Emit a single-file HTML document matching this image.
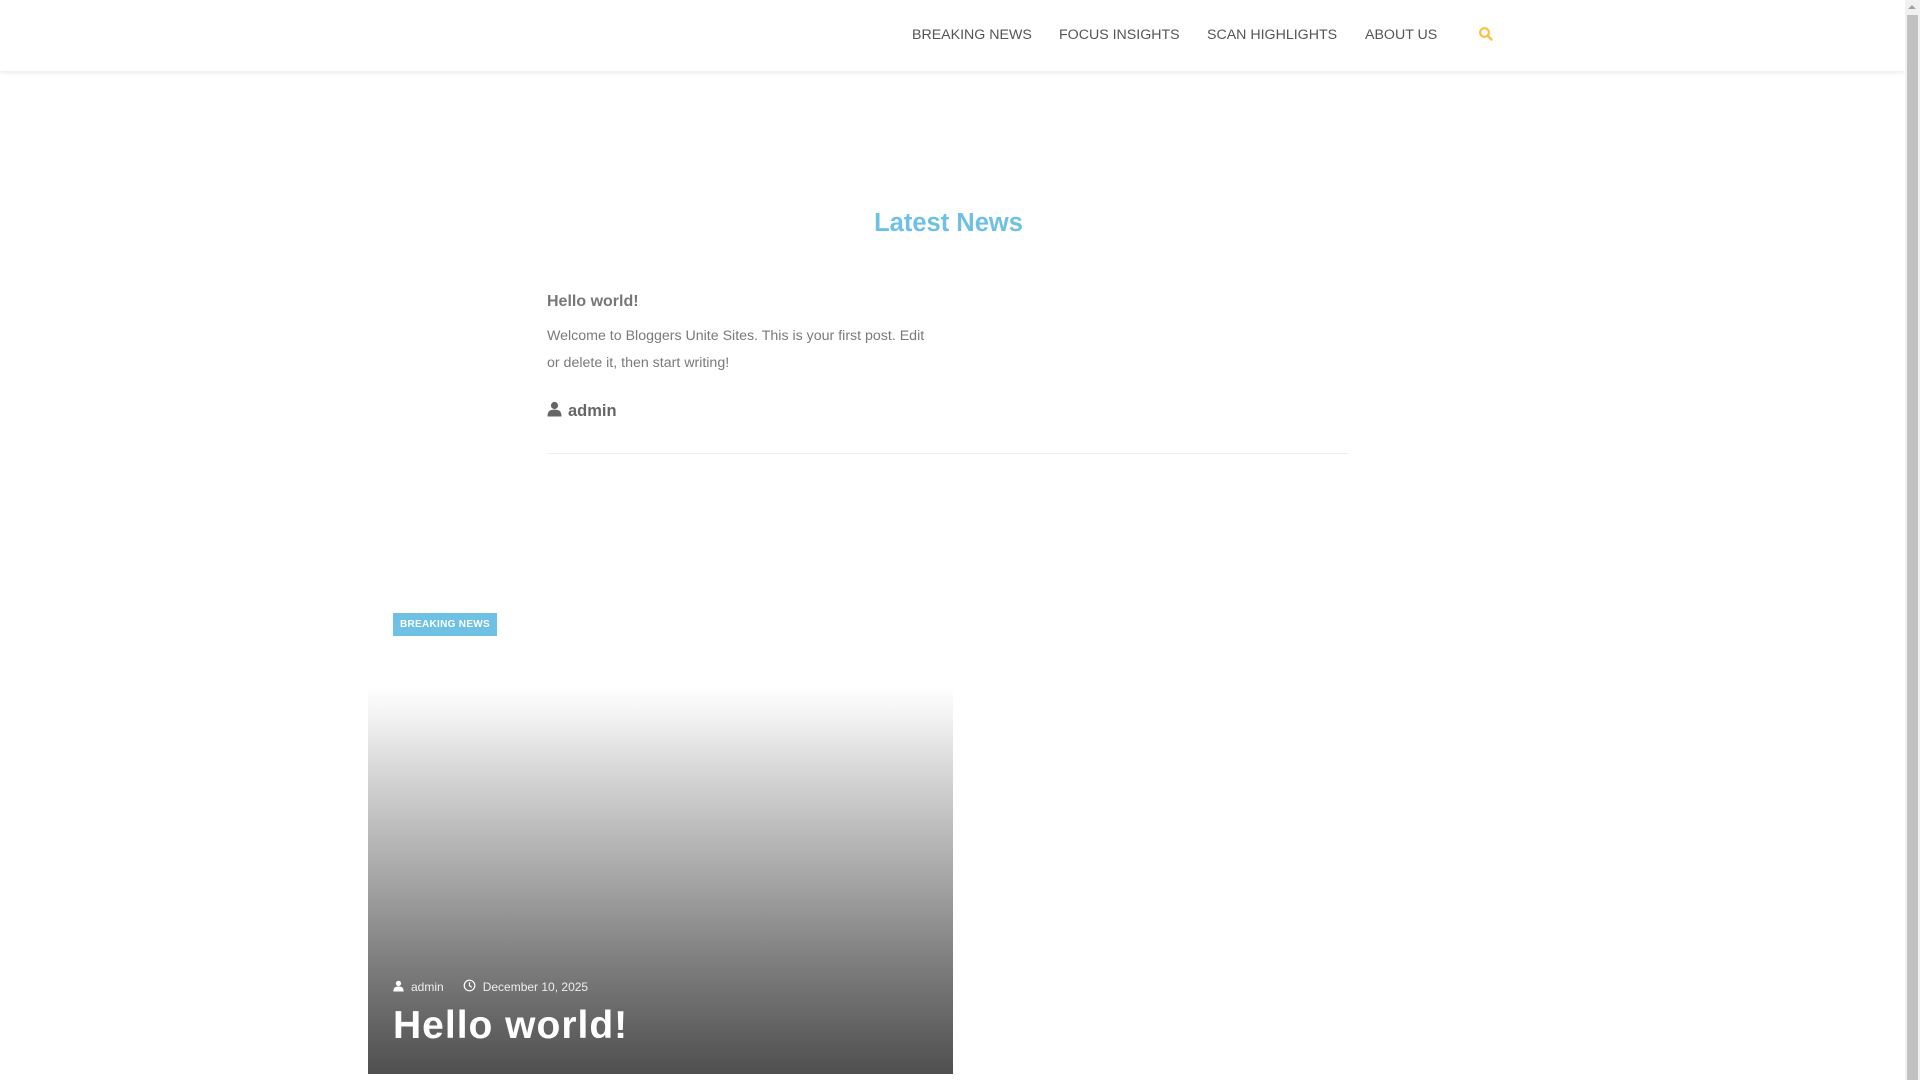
<!DOCTYPE html>
<html><head><meta charset="utf-8"><style>
html,body{margin:0;padding:0;width:1920px;height:1080px;overflow:hidden;background:#fff;font-family:"Liberation Sans",Arial,sans-serif;}
.hdr{position:absolute;left:0;top:0;width:1905px;height:71px;background:#fff;box-shadow:0 2px 4px rgba(0,0,0,.08);}
.nav{position:absolute;top:27px;font-size:14.2px;color:#555;white-space:nowrap;}
.sb{position:absolute;right:0;top:0;width:15px;height:1080px;background:#f1f1f1;}
.sb .th{position:absolute;left:2px;top:15px;width:11px;height:1065px;background:#c1c1c1;}
.sb .ar{position:absolute;left:3px;top:5px;width:0;height:0;border-left:4px solid transparent;border-right:4px solid transparent;border-bottom:4px solid #a3a3a3;}
h2{position:absolute;left:0;width:1897px;top:209px;margin:0;text-align:center;font-size:25.5px;font-weight:bold;color:#6ec1e4;}
.t{position:absolute;left:547px;top:293px;font-size:16px;font-weight:bold;color:#777;margin:0;}
.p{position:absolute;left:547px;top:323px;font-size:14.2px;line-height:27px;color:#7a7a7a;width:390px;}
.a{position:absolute;left:547px;top:401px;font-size:16.5px;font-weight:bold;color:#666;}
.hr{position:absolute;left:547px;top:453px;width:801px;height:1px;background:#eee;}
.badge{position:absolute;left:393px;top:613px;width:104px;height:23px;background:#6ec1e4;color:#fff;font-size:10px;font-weight:bold;line-height:23px;text-align:center;letter-spacing:.3px;}
.card{position:absolute;left:368px;top:686px;width:585px;height:388px;background:linear-gradient(#fff 0%,#f2f2f2 8%,#d3d3d3 24%,#a5a5a5 50%,#808080 70%,#4f4f4f 100%);}
.meta{position:absolute;left:25px;top:293px;font-size:12px;color:#eee;white-space:nowrap;}
.ct{position:absolute;left:25px;top:318px;font-size:39px;font-weight:bold;color:#fff;letter-spacing:1px;margin:0;}
</style></head><body>
<div class="hdr">
<div class="nav" style="left:912px">BREAKING NEWS</div>
<div class="nav" style="left:1059px">FOCUS INSIGHTS</div>
<div class="nav" style="left:1207px">SCAN HIGHLIGHTS</div>
<div class="nav" style="left:1365px">ABOUT US</div>
<svg style="position:absolute;left:1478px;top:26px" width="16" height="16" viewBox="0 0 16 16"><circle cx="6.5" cy="6.5" r="4.3" fill="none" stroke="#f9c13e" stroke-width="2.2"/><path d="M9.7 9.7L13.5 13.5" stroke="#f9c13e" stroke-width="2.4" stroke-linecap="round"/></svg>
</div>
<h2>Latest News</h2>
<p class="t">Hello world!</p>
<div class="p">Welcome to Bloggers Unite Sites. This is your first post. Edit or delete it, then start writing!</div>
<div class="a"><svg width="15" height="16" viewBox="0 0 15 16" style="vertical-align:-1px;margin-right:6px"><circle cx="7.5" cy="4.5" r="3.6" fill="#666"/><path d="M0.5 15.5C0.5 10 3 8.6 7.5 8.6S14.5 10 14.5 15.5Z" fill="#666"/></svg>admin</div>
<div class="hr"></div>
<div class="badge">BREAKING NEWS</div>
<div class="card">
<div class="meta"><svg width="11" height="12" viewBox="0 0 15 16" style="vertical-align:-1px;margin-right:7px"><circle cx="7.5" cy="4.5" r="3.6" fill="#fff"/><path d="M0.5 15.5C0.5 10 3 8.6 7.5 8.6S14.5 10 14.5 15.5Z" fill="#fff"/></svg>admin<svg width="13" height="13" viewBox="0 0 14 14" style="vertical-align:-1px;margin:0 7px 0 19px"><circle cx="7" cy="7" r="5.7" fill="none" stroke="#fff" stroke-width="1.3"/><path d="M7 3.5V7L9.3 9" fill="none" stroke="#fff" stroke-width="1.3"/></svg>December 10, 2025</div>
<p class="ct">Hello world!</p>
</div>
<div class="sb"><div class="ar"></div><div class="th"></div></div>
</body></html>
